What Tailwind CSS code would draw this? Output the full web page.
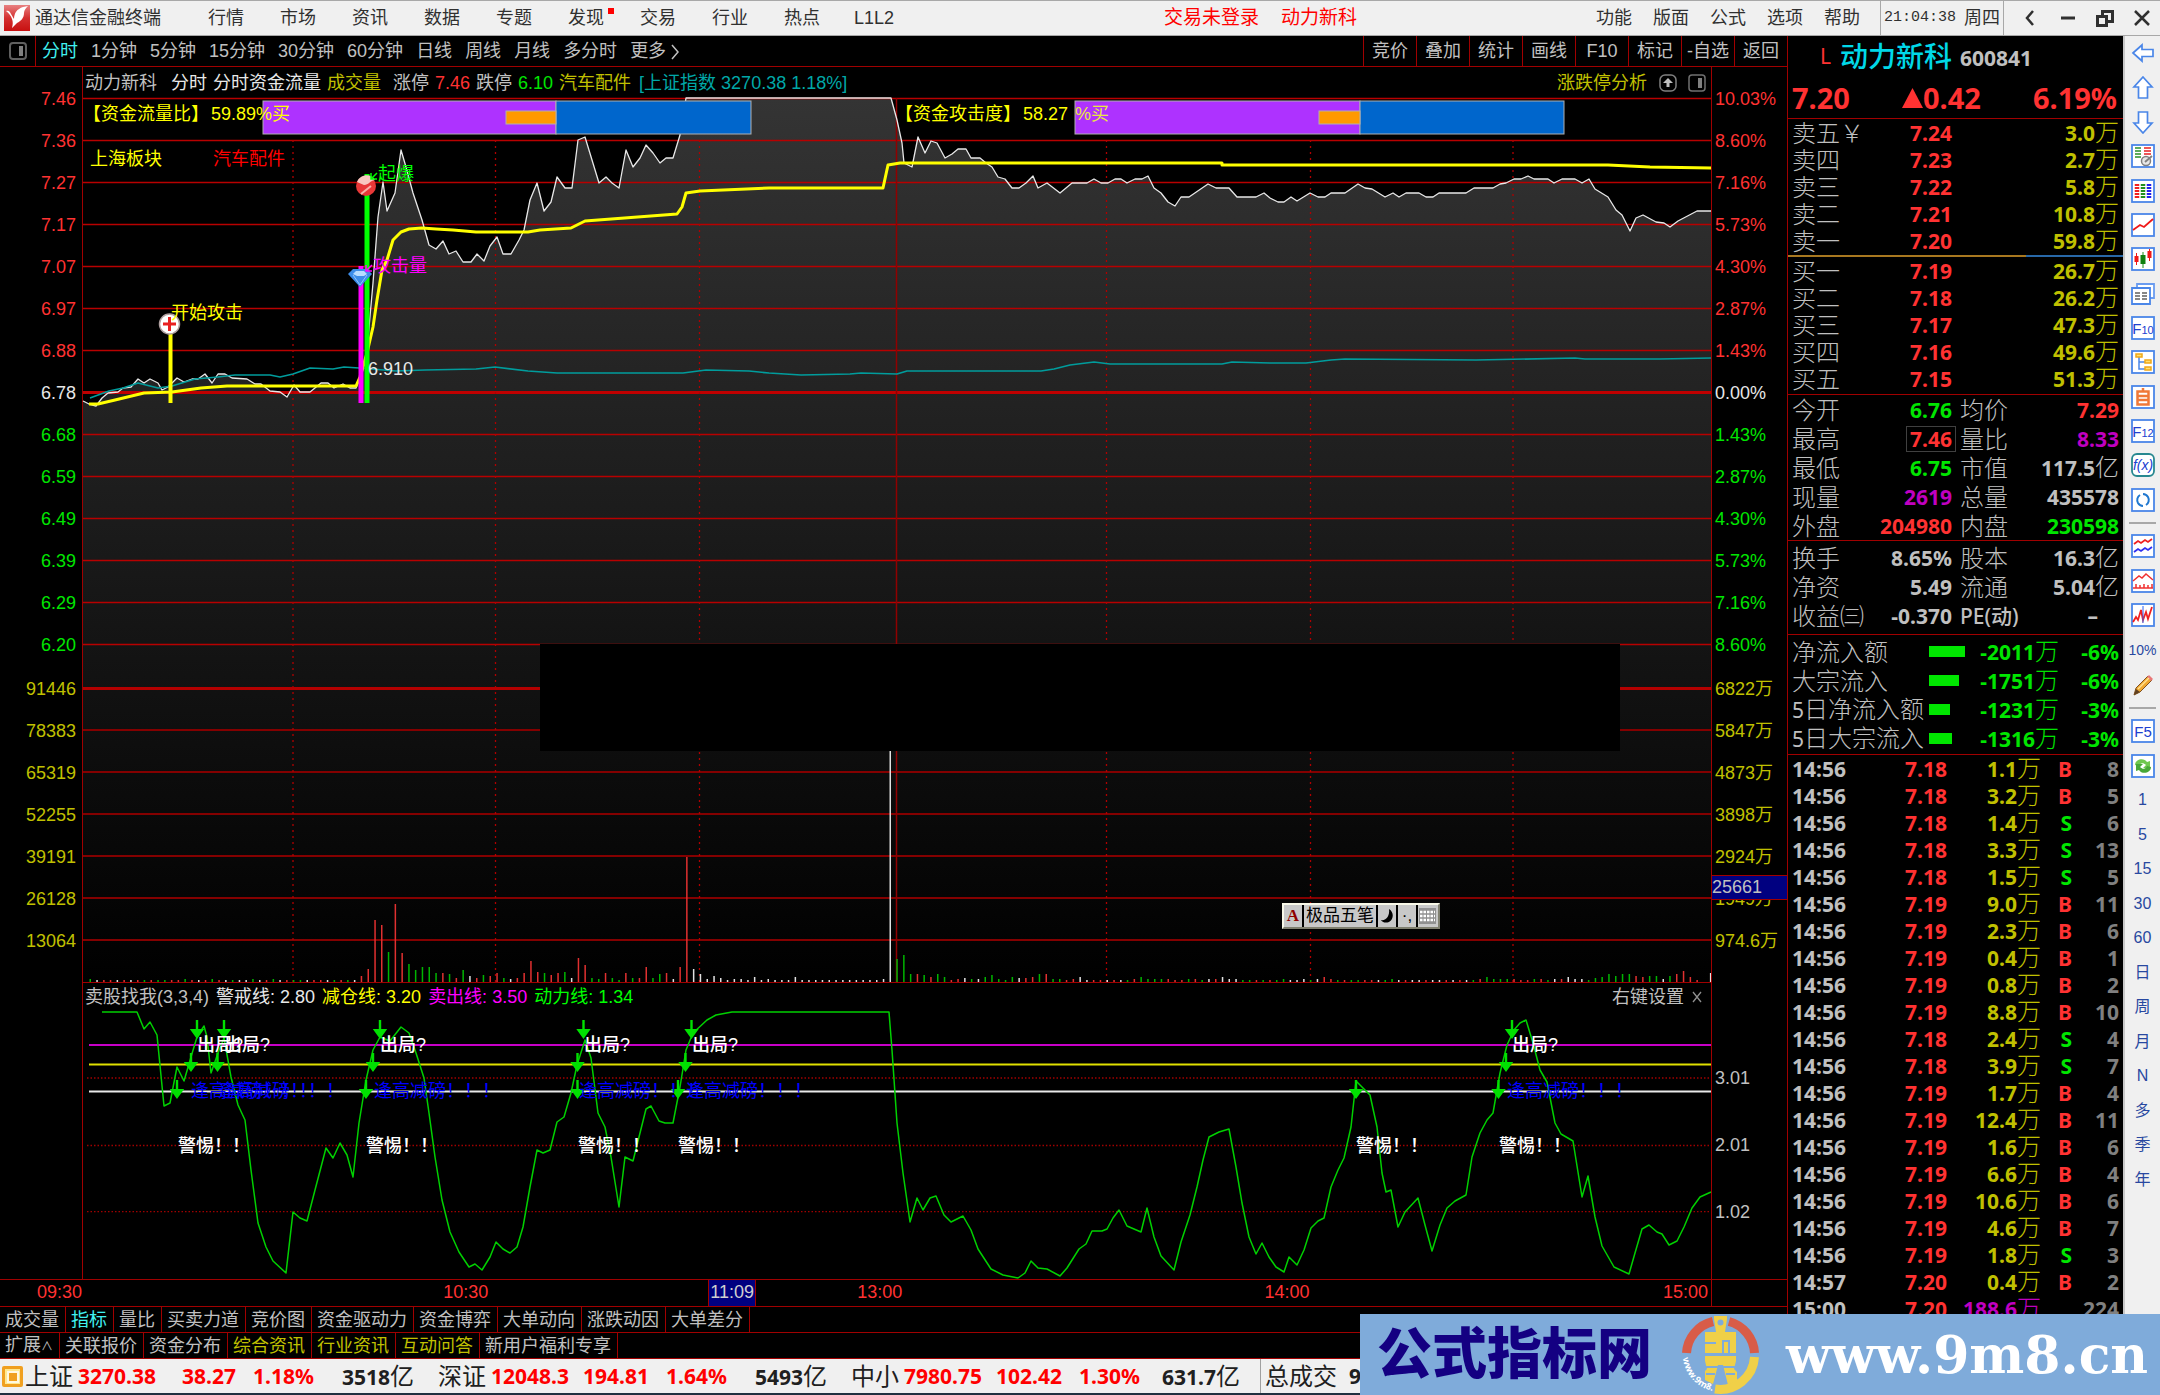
<!DOCTYPE html>
<html lang="zh-CN">
<head>
    <meta charset="UTF-8">
    <meta name="viewport" content="width=device-width, initial-scale=1.0">
    <title>通达信金融终端</title>
    <script src="https://cdn.jsdelivr.net/npm/@tailwindcss/browser@4"></script>
</head>
<body class="relative flex min-h-screen flex-col overflow-x-hidden bg-black font-['Liberation_Sans','Noto_Sans_CJK_SC',sans-serif] text-[18px] leading-6 whitespace-nowrap text-[#c0c0c0]">

    <!-- Menu bar -->
    <header class="flex h-9 items-center border-y border-[#a8a8a8] bg-[#f0f0f0] text-[#303030]">
        <svg class="ml-1 size-[26px]" viewBox="0 0 26 26">
            <defs><linearGradient id="logoRed" x1="0" y1="0" x2="0" y2="1"><stop offset="0" stop-color="#e88080"/><stop offset=".5" stop-color="#d43030"/><stop offset="1" stop-color="#c81010"/></linearGradient></defs>
            <rect width="26" height="26" fill="url(#logoRed)"/>
            <path d="M2 6c3-1 4 1 5 3l3 5c0-6 3-10 9-12l5-1c-2 2-4 4-4 7 0 5-3 8-7 10l-5 5c1-4 1-6 0-9C7 11 5 8 2 6z" fill="#fff"/>
        </svg>
        <h1 class="ml-[5px] w-[155px]">通达信金融终端</h1>
        <nav id="menuLeft" class="flex"></nav>
        <div class="ml-auto flex gap-[22px] text-[19px] text-[#ff0000]"><a href="#">交易未登录</a><a href="#">动力新科</a></div>
        <nav class="ml-[239px] flex gap-[21px]"><a href="#">功能</a><a href="#">版面</a><a href="#">公式</a><a href="#">选项</a><a href="#">帮助</a></nav>
        <div class="ml-5 flex h-full items-center gap-2 border-x border-[#a8a8a8] px-[3px]"><time class="font-['Liberation_Mono',monospace] text-[15px]">21:04:38</time><span>周四</span></div>
        <div class="ml-[17px] flex items-center gap-[17px] pr-2">
            <button aria-label="返回"><svg class="size-5" viewBox="0 0 20 20" fill="none" stroke="#303030" stroke-width="2.5"><path d="M12 3 6 10l6 7"/></svg></button>
            <button aria-label="最小化"><svg class="size-5" viewBox="0 0 20 20" stroke="#303030" stroke-width="3"><path d="M3 10h14"/></svg></button>
            <button aria-label="还原"><svg class="size-5" viewBox="0 0 20 20" fill="none" stroke="#303030" stroke-width="3"><path d="M2.500 8.500h9v9h-9z"/><path d="M7.500 8V3.500h10v10H12"/></svg></button>
            <button aria-label="关闭"><svg class="size-5" viewBox="0 0 20 20" stroke="#303030" stroke-width="2.500"><path d="m3 3 14 14M17 3 3 17"/></svg></button>
        </div>
    </header>

    <main class="flex flex-1">
        <!-- Chart side -->
        <section class="flex min-w-0 flex-1 flex-col">
            <div class="flex h-[31px] items-center border-b border-[#a00000]">
                <button aria-label="侧栏" class="flex h-full w-9 items-center justify-center border-r border-[#a00000]"><svg class="size-[18px]" viewBox="0 0 18 18" fill="none"><rect x="1" y="1" width="16" height="16" rx="3" stroke="#606060" stroke-width="2"/><path d="M12 4v10" stroke="#808080" stroke-width="4"/></svg></button>
                <nav id="periods" class="flex gap-[13px] pl-1.5"></nav>
                <div id="tools" class="ml-auto grid h-full grid-cols-8"></div>
            </div>

            <div class="grid grid-cols-[82px_1fr_76px]">
                <div id="axisLeft" class="pt-[11px] pr-1.5 text-right"></div>

                <div class="flex min-w-0 flex-col border-l border-[#a00000]">
                    <div class="flex h-[31px] items-center pl-0.5">
                        <span class="mr-3.5">动力新科</span>
                        <span class="mr-1.5 text-[#e8e8e8]">分时</span><span class="mr-1.5 text-[#e8e8e8]">分时资金流量</span>
                        <span class="mr-3 text-[#c0c000]">成交量</span>
                        <span class="mr-1.5">涨停</span><span class="mr-1.5 text-[#ff3232]">7.46</span>
                        <span class="mr-1.5">跌停</span><span class="mr-1.5 text-[#00e600]">6.10</span>
                        <span class="mr-2 text-[#c0c000]">汽车配件</span>
                        <span class="text-[#00a8a8]">[上证指数 3270.38 1.18%]</span>
                        <a href="#" class="ml-auto text-[#c0c000]">涨跌停分析</a>
                        <svg class="ml-3 size-[18px]" viewBox="0 0 18 18" fill="none"><rect x="1" y="1" width="16" height="16" rx="5" stroke="#808080" stroke-width="1.500"/><path d="M9 13V7" stroke="#c0c0c0" stroke-width="3"/><path d="m4 9 5-5 5 5z" fill="#c0c0c0"/></svg>
                        <svg class="mr-[5px] ml-[11px] size-[18px]" viewBox="0 0 18 18" fill="none"><rect x="1" y="1" width="16" height="16" rx="3" stroke="#707070" stroke-width="1.500"/><path d="M12 4v10" stroke="#808080" stroke-width="4"/></svg>
                    </div>

                    <div id="pricePane" class="relative h-[884px]">
                        <svg id="priceSvg" class="absolute inset-0 size-full overflow-visible" viewBox="83 98 1628 884" preserveAspectRatio="none"></svg>
                    </div>

                    <div class="flex h-7 items-center gap-[7px] border-t border-[#a00000] pl-0.5">
                        <span>卖股找我(3,3,4)</span>
                        <span class="text-[#e8e8e8]">警戒线: 2.80</span>
                        <span class="text-[#ffff00]">减仓线: 3.20</span>
                        <span class="text-[#ff00ff]">卖出线: 3.50</span>
                        <span class="text-[#00ff00]">动力线: 1.34</span>
                        <span class="ml-auto">右键设置</span>
                        <button aria-label="关闭指标"><svg class="mr-2 size-3" viewBox="0 0 12 12" stroke="#909090" stroke-width="1.300"><path d="m2 1 8 10M10 1 2 11"/></svg></button>
                    </div>

                    <div id="signalPane" class="relative h-[269px]">
                        <svg id="signalSvg" class="absolute inset-0 size-full overflow-visible" viewBox="83 1010 1628 269" preserveAspectRatio="none"></svg>
                    </div>
                </div>

                <div class="relative border-l border-[#a00000] pt-[11px]">
                    <div id="axisRight" class="pl-[3px]"></div>
                    <div class="mt-[83px] pl-[3px]"><div class="h-[67px] leading-[67px]">3.01</div><div class="h-[67px] leading-[67px]">2.01</div><div class="h-[67px] leading-[67px]">1.02</div></div>
                    <div class="absolute inset-x-0 top-[808px] h-[25px] border-y border-[#a00000] bg-[#000080] leading-[23px]">25661</div>
                </div>
            </div>

            <div class="flex h-[27px] border-t border-[#a00000]">
                <div class="relative flex-1 leading-6 text-[#ff3232]">
                    <span class="absolute left-[37px]">09:30</span>
                    <span class="absolute left-[25.9%]">10:30</span>
                    <span class="absolute left-[41.4%] h-full border-x border-[#a00000] bg-[#000080] px-px text-[#d0d0d0]">11:09</span>
                    <span class="absolute left-[50.1%]">13:00</span>
                    <span class="absolute left-[73.9%]">14:00</span>
                    <span class="absolute right-[3px]">15:00</span>
                </div>
                <div class="w-[76px] border-l border-[#a00000]"></div>
            </div>
            <nav id="tabsTop" class="flex h-[26px] border-t border-[#a00000]"></nav>
            <nav id="tabsBottom" class="flex h-[27px] border-y border-[#a00000]"></nav>
        </section>

        <!-- Quote panel -->
        <aside class="w-[336px] border-l border-[#a00000] font-['Noto_Sans','Noto_Sans_CJK_SC',sans-serif] text-[21px]">
            <div class="h-[83px] border-b border-[#a00000]">
                <h2 class="flex h-10 items-center pl-8">
                    <span class="w-5 text-[#ff3232]">L</span>
                    <span class="text-[28px] font-medium text-[#00d8e8]">动力新科</span>
                    <span class="ml-2 pt-1 font-bold">600841</span>
                </h2>
                <div class="flex h-11 items-center justify-between pr-1.5 pl-1 text-[29px] font-bold text-[#ff3232]"><span>7.20</span><span class="flex items-center"><svg class="h-5 w-[21px]" viewBox="0 0 21 20"><path d="M10.500 0 21 20H0z" fill="#ff3232"/></svg>0.42</span><span>6.19%</span></div>
            </div>
            <table class="w-full table-fixed"><tbody id="asks"></tbody></table>
            <div class="mt-px flex h-0.5"><div class="w-[238px] bg-[#a87820]"></div><div class="flex-1 bg-[#2868a8]"></div></div>
            <table class="w-full table-fixed"><tbody id="bids"></tbody></table>
            <div class="mt-0.5 border-t border-[#a00000]"><table class="w-full table-fixed"><tbody id="statsA"></tbody></table></div>
            <div class="border-t border-[#a00000] pt-0.5 pb-1"><table class="w-full table-fixed"><tbody id="statsB"></tbody></table></div>
            <div class="border-t border-[#a00000] pt-0.5 pb-px"><table class="w-full table-fixed"><tbody id="flows"></tbody></table></div>
            <div class="border-t border-[#a00000]"><table class="w-full table-fixed"><tbody id="ticks"></tbody></table></div>
        </aside>

        <!-- Tool strip -->
        <nav class="w-[37px] border-l-2 border-[#c8c8c8] bg-[#f0f0f0] text-[16px] text-[#2848a0]">
            <div id="strip1" class="flex h-[481px] flex-col"></div>
            <div class="flex h-3 items-center px-1"><hr class="w-full border-t-2 border-[#a8a8a8]"></div>
            <div id="strip2" class="flex h-[173px] flex-col"></div>
            <div class="flex h-3 items-center px-1"><hr class="w-full border-t-2 border-[#a8a8a8]"></div>
            <div id="strip3" class="flex h-[483px] flex-col"></div>
        </nav>
    </main>

    <!-- Index status bar -->
    <footer class="flex h-9 items-center border-b-2 border-[#203040] bg-[#f0f0f0] font-['Noto_Sans','Noto_Sans_CJK_SC',sans-serif] text-[24px] text-[#202020]">
        <svg class="mr-0.5 ml-0.5 size-[21px]" viewBox="0 0 21 21"><rect width="21" height="21" rx="2" fill="#f0a020"/><rect x="3" y="3" width="15" height="15" fill="#ffe890"/><rect x="5" y="5" width="12" height="12" fill="#fff8e0"/><rect x="7" y="7" width="8" height="8" fill="#f0a020"/></svg>
        <div id="indexes" class="flex gap-6"></div>
        <div class="ml-5 flex h-full items-center border-l border-[#a0a0a0] pl-1">总成交<b class="ml-3 text-[21px]">9011</b>亿</div>
    </footer>

    <!-- Input method bar -->
    <div class="absolute top-[903px] left-[59.35%] flex h-[26px] border-2 border-[#f8f8e8] border-r-[#808070] border-b-[#808070] bg-[#c8c8c8] text-[17px] leading-[22px] text-black">
        <button class="w-5 border-r-2 border-black font-['Liberation_Serif',serif] font-bold text-[#900000]">A</button>
        <button class="border-r-2 border-black px-0.5">极品五笔</button>
        <button aria-label="半角" class="w-5 border-r-2 border-black"><svg class="mx-auto size-4" viewBox="0 0 16 16"><path d="M10 1c5 3 5 10 0 13-3 1-6 1-8-2 5 1 9-4 8-11z"/></svg></button>
        <button class="w-5 border-r-2 border-black">·,</button>
        <button aria-label="软键盘" class="w-5"><svg class="mx-auto h-4 w-[17px]" viewBox="0 0 17 16" stroke="#fff" stroke-width="2.500"><rect width="17" height="16" fill="#909090" stroke="none"/><path stroke-dasharray="2.500 1" d="M1 4h15M1 8h15M1 12h15"/></svg></button>
    </div>

    <!-- Site banner -->
    <a href="#" class="absolute right-0 bottom-0 flex h-[81px] w-[800px] items-center bg-[#7fabda]">
        <span class="w-[320px] pl-[17px] text-[55px] leading-none font-black text-[#140082]">公式指标网</span>
        <svg class="h-[78px] w-[82px]" viewBox="0 0 82 78">
            <g fill="none" stroke-width="9">
                <path d="M6.500 37A34.500 34.500 0 0 1 33 5.500" stroke="#d85c48"/>
                <path d="M49 5.500A34.500 34.500 0 0 1 74.500 37" stroke="#d85c48"/>
                <path d="M74.500 41A34.500 34.500 0 0 1 35 73" stroke="#f0d048"/>
            </g>
            <g fill="#f0d048"><path d="M34 0h13v3l-2 13H36L34 3z"/><path d="M25 16h31v21H25z"/><path d="M25 40h31v5l-2 8 3 3v9l-9 4-5-20h-5l-5 19-8-4v-9l2-2-2-8z"/></g>
            <circle cx="40.500" cy="6.500" r="3" fill="#7fabda"/>
            <path d="M25 27h11M43 37V25h6v12M26 51h12M43 51h12M26 58h9M46 58h9" stroke="#7fabda" stroke-width="2" fill="none"/>
            <path id="ring" d="M3 42A38 38 0 0 0 33 75" fill="none"/>
            <text class="font-['Noto_Sans',sans-serif]" font-size="9" font-weight="700" fill="#fff"><textPath href="#ring">www.9m8.cn</textPath></text>
        </svg>
        <span class="pl-6 font-['DejaVu_Serif',serif] text-[52px] leading-none font-bold text-white">www.9m8.cn</span>
    </a>

    <script>
        const $ = id => document.getElementById(id);
        const fill = (id, html) => { $(id).innerHTML = html; };
        const RED = 'text-[#ff3232]', GREEN = 'text-[#00e600]', YELLOW = 'text-[#c0c000]', PURPLE = 'text-[#c000c0]', GRAY = 'text-[#c0c0c0]';

        // ---- menus and tabs ----
        fill('menuLeft', '行情 市场 资讯 数据 专题 发现 交易 行业 热点 L1L2'.split(' ').map(t =>
            `<a href="#" class="relative w-[72px] text-center">${t}${t === '发现' ? '<i class="absolute top-0.5 right-2 size-1.5 bg-[#ff0000]"></i>' : ''}</a>`).join(''));
        fill('periods', '分时 1分钟 5分钟 15分钟 30分钟 60分钟 日线 周线 月线 多分时 更多'.split(' ').map((t, i) =>
            `<button class="${i ? '' : 'text-[#40f0f0]'}">${t}${t === '更多' ? '<svg class="ml-1 inline h-4 w-2.5" viewBox="0 0 10 16" fill="none" stroke="#c0c0c0" stroke-width="1.500"><path d="m2 1 6 7-6 7"/></svg>' : ''}</button>`).join(''));
        fill('tools', '竞价 叠加 统计 画线 F10 标记 -自选 返回'.split(' ').map(t =>
            `<button class="w-[53px] border-l border-[#a00000] text-center">${t}</button>`).join(''));
        const tabs = (list, on) => list.split(' ').map(t =>
            `<button class="border-r border-[#a00000] pr-1.5 pl-[5px] leading-6 ${on[t] || ''}">${t.replace('∧', '<small class="text-[12px]">∧</small>')}</button>`).join('');
        fill('tabsTop', tabs('成交量 指标 量比 买卖力道 竞价图 资金驱动力 资金博弈 大单动向 涨跌动因 大单差分', { '指标': 'text-[#40f0f0]' }));
        fill('tabsBottom', tabs('扩展∧ 关联报价 资金分布 综合资讯 行业资讯 互动问答 新用户福利专享', { '综合资讯': YELLOW, '行业资讯': YELLOW, '互动问答': YELLOW }));

        // ---- axes ----
        const axis = (prices, volumes, mid) => prices.map((t, i) =>
            `<div class="h-[42px] leading-[42px] ${i < mid ? RED : i === mid ? 'text-[#e8e8e8]' : GREEN}">${t}</div>`).join('') +
            '<div class="h-0.5"></div>' + volumes.map(t => `<div class="h-[42px] leading-[42px] ${YELLOW}">${t}</div>`).join('');
        fill('axisLeft', axis('7.46 7.36 7.27 7.17 7.07 6.97 6.88 6.78 6.68 6.59 6.49 6.39 6.29 6.20'.split(' '),
            '91446 78383 65319 52255 39191 26128 13064'.split(' '), 7));
        fill('axisRight', axis('10.03% 8.60% 7.16% 5.73% 4.30% 2.87% 1.43% 0.00% 1.43% 2.87% 4.30% 5.73% 7.16% 8.60%'.split(' '),
            '6822万 5847万 4873万 3898万 2924万 1949万 974.6万'.split(' '), 7));

        // ---- price and volume chart ----
        const price = '83,401 89,404 96,406 102,398 108,393 118,392 123,388 131,387 138,379 144,383 150,379 158,383 162,390 168,387 177,378 184,382 192,379 198,379 205,374 212,383 218,374 225,374 232,378 247,379 255,384 261,384 270,391 280,392 287,397 294,385 300,392 310,392 321,383 328,383 334,388 343,384 350,388 356,388 362,373 367,350 373,283 378,217 383,182 387,211 395,193 401,150 406,167 413,193 422,220 429,245 436,249 443,241 449,254 456,251 463,262 471,262 477,254 484,261 490,246 497,237 503,254 511,254 519,240 524,230 530,200 537,183 544,211 551,202 557,177 565,188 572,188 578,140 585,137 592,160 599,183 606,177 612,183 619,188 626,150 633,167 640,158 646,145 653,153 660,163 666,158 673,158 680,135 686,98 891,98 897,120 902,143 904,163 912,167 918,137 925,153 931,141 937,143 945,158 952,154 958,149 966,149 971,158 980,158 986,163 992,167 998,177 1005,179 1012,188 1019,188 1026,183 1033,176 1038,188 1047,183 1060,193 1072,183 1087,183 1094,179 1101,183 1108,183 1115,179 1121,179 1127,183 1135,179 1142,179 1148,176 1154,188 1161,193 1168,202 1175,206 1181,197 1189,197 1208,184 1216,188 1229,188 1237,197 1256,197 1264,193 1270,198 1278,202 1284,202 1291,197 1297,201 1310,193 1318,197 1325,197 1331,193 1345,193 1358,184 1365,188 1372,189 1385,197 1393,193 1399,197 1406,193 1419,193 1426,197 1433,197 1439,193 1466,193 1474,188 1493,188 1500,184 1506,183 1514,179 1521,179 1528,176 1534,179 1548,179 1554,183 1562,179 1575,179 1582,183 1589,179 1595,189 1608,197 1616,210 1622,215 1630,231 1636,218 1643,215 1656,222 1664,223 1670,227 1678,221 1697,211 1711,211';
        const average = '89,404 98,404 115,400 144,393 172,392 201,388 227,386 356,386 360,377 367,353 373,327 377,300 382,270 387,260 393,240 401,232 409,229 422,228 436,229 453,230 476,232 528,232 540,230 571,228 585,221 677,214 682,207 686,193 700,191 769,188 883,188 888,165 900,163 1222,163 1222,165 1608,165 1650,167 1711,168';
        const market = '90,398 109,391 123,388 138,383 158,388 172,386 195,379 218,377 235,375 270,375 280,377 293,374 310,368 333,369 344,367 359,368 396,371 425,370 476,369 495,367 528,371 557,373 683,373 706,370 749,371 769,373 801,375 850,374 861,373 897,374 907,371 1041,371 1054,369 1070,365 1094,362 1110,364 1222,364 1232,362 1270,363 1306,363 1331,360 1345,359 1476,360 1575,358 1585,359 1660,359 1711,358';
        const INK = { r: '#e03030', g: '#00b400', w: '#e0e0e0' };

        // one entry per minute: bar height and colour
        let bars = ('3g 2w 2r 2r 2w 2r 2w 2r 2g 2r 2g 2g 2r 2r 3g 2r 2w 2r 3g 2r 2w 2g 2w 2w 3g 2w 2r 3g 2w 2r 2g 2g 2w 2r 2r 2w 2g 2r 2g 2w ' +
            '6r 13r 62r 57r 30g 78r 29r 18g 12g 15g 15g 9g 9r 8g 4r 12g 6w 4r 7g 6r 9r 4g 3w 4r 9r 21r 10r 9g 7r 9r 10g 4w 24r 17r 4g 3g 9r 4g 2g 9r 4g 4r 15r 4g 8g 9r 3w 15r 125r ' +
            '13w 8w 3w 6w 4w 2w 3w 3w 2w 5w 2w 3w 2w 2w 2w 5w 2w 2w 2w 2w 2w 2w 2w 2w 2w 2w 2w 2w 3w 300w ' +
            '23g 27g 8g 8r 7g 5r 8g 5g 2r 3r 4w 3g 3w 5g 7g 3g 2g 5g 4w 4r 5r 8g 8r 3g 3g 2r 3r 5w 2w 2r').split(' ');
        const quiet = '2r 2w 2r 2w 2g 3r 5g 3g 3g 3g 3r 2r 2r 3g 3r 2g 3w 3r 5w 3w 3w 2g 2g 2r 2g 2r 2g 3g 2w 2w 3w 2g 3w 5r 3r 2g 2r 2g 2g 2r 2r 2w 2g 3g 2w 2r 2w 2w 2r 2w 2w'.split(' ');
        for (let i = 0; bars.length < 222; i++) bars.push(quiet[i % quiet.length]);
        bars = bars.concat('4g 5g 8g 6g 8g 8g 6r 5r 6g 6g 3w 6g 8r 11r 5r 2r 0w 9w'.split(' '));

        const line = (pts, color, w) => `<polyline points="${pts}" fill="none" stroke="${color}" stroke-width="${w}" stroke-linejoin="round"/>`;
        const hline = (y, color, w, x1 = 83) => `<path d="M${x1} ${y}H1711" stroke="${color}" stroke-width="${w}"/>`;
        let svg = '<defs><linearGradient id="fade" gradientUnits="userSpaceOnUse" x1="0" y1="98" x2="0" y2="982"><stop offset="0" stop-color="#343434"/><stop offset="1" stop-color="#000"/></linearGradient></defs>';
        svg += `<polygon points="${price} 1711,982 83,982" fill="url(#fade)"/>`;
        for (let i = 0; i < 14; i++) svg += hline(98.5 + 42 * i, i === 7 ? '#c00000' : '#b80000', i === 7 ? 3 : 1.6);
        for (let i = 0; i < 7; i++) svg += hline(i ? 688 + 42 * i : 688.5, i ? '#840000' : '#b40000', i ? 2 : 3);
        [293, 495.5, 699.5, 1106.5, 1310.5, 1513].forEach(x => {
            svg += `<path d="M${x} 140V982" stroke="#b00000" stroke-width="1.300" stroke-dasharray="2 4"/>`;
        });
        svg += '<path d="M896.500 98V982" stroke="#900000" stroke-width="1.500"/>';
        bars.forEach((b, i) => {
            const h = parseInt(b);
            svg += `<rect x="${(89.5 + i * 6.78).toFixed(1)}" y="${982 - h}" width="1.500" height="${h}" fill="${INK[b.slice(-1)]}"/>`;
        });
        svg += line(price, '#e8e8e8', 1.3) + line(market, '#009c9c', 1.7) + line(average, '#ffff00', 3);
        svg += '<g stroke="#b0b0b0"><rect x="263" y="101" width="293" height="33" fill="#ae32ff"/><rect x="556" y="101" width="195" height="33" fill="#0066cc"/><rect x="506" y="111" width="50" height="13" fill="#ff9900"/><rect x="1075" y="101" width="285" height="33" fill="#ae32ff"/><rect x="1360" y="101" width="204" height="33" fill="#0066cc"/><rect x="1319" y="111" width="41" height="13" fill="#ff9900"/></g>';
        svg += '<rect x="540" y="644" width="1080" height="107" fill="#000"/>';
        svg += '<path d="M170.500 333V403" stroke="#ff0" stroke-width="4"/><path d="M361 266V403" stroke="#f0f" stroke-width="5"/><path d="M367 174V403" stroke="#0f0" stroke-width="5"/>';
        svg += '<circle cx="169.500" cy="324" r="10" fill="#fff" stroke="#b0a0a0" stroke-width="1.500"/><path d="M163 324h13M169.500 317v14" stroke="#e82020" stroke-width="3"/>';
        svg += '<circle cx="366" cy="186" r="10" fill="#e83838"/><path d="M357 182c3-8 14-9 18-2-6 1-6 5-11 5z" fill="#f8c8c0"/><path d="m361 194 10-8" stroke="#f8b0a8" stroke-width="2"/>';
        svg += '<path d="m348 274 5-5h14l5 5-12 13z" fill="#3c8ce8"/><path d="m353 274 3-3h8l3 3-3 2h-7z" fill="#b8dcff"/><path d="m360 285-7-10M360 285l7-10" stroke="#90c4ff"/>';
        svg += '<path d="m371 179 6-6M371 173v6h6" stroke="#0f0" fill="none" stroke-width="1.500"/><path d="m366 271 6-6M366 265v6h6" stroke="#f0f" fill="none" stroke-width="1.500"/>';
        fill('priceSvg', svg);

        // labels sit on the plot by data coordinates
        function label(pane, top, height, x, y, text, cls) {
            $(pane).insertAdjacentHTML('beforeend', `<span class="absolute -translate-y-1/2 leading-none ${cls}" style="left:${((x - 83) / 16.28).toFixed(2)}%;top:${((y - top) / height * 100).toFixed(2)}%">${text}</span>`);
        }
        const onPrice = (x, y, text, cls) => label('pricePane', 98, 884, x, y, text, cls);
        onPrice(83, 114, '【资金流量比】', 'text-[#ffff00]');
        onPrice(211, 114, '59.89%买', 'text-[#ffff00]');
        onPrice(895, 114, '【资金攻击度】', 'text-[#ffff00]');
        onPrice(1023, 114, '58.27', 'text-[#ffff00]');
        onPrice(1075, 114, '%买', 'text-[#e8e840]');
        onPrice(90, 159, '上海板块', 'text-[#ffff00]');
        onPrice(213, 159, '汽车配件', 'text-[#ff0000]');
        onPrice(378, 174, '起爆', 'text-[#00ff00]');
        onPrice(373, 266, '攻击量', 'text-[#ff00ff]');
        onPrice(171, 313, '开始攻击', 'text-[#ffff00]');
        onPrice(368, 369, '6.910', 'text-[#e8e8e8]');

        // ---- indicator chart ----
        const power = '102,1012 137,1012 144,1029 150,1022 157,1035 164,1106 170,1103 177,1067 184,1081 191,1057 197,1037 204,1026 207,1037 211,1073 218,1053 224,1038 231,1077 238,1105 245,1120 251,1170 258,1223 266,1247 273,1261 286,1273 293,1212 300,1218 307,1221 315,1190 326,1148 333,1158 340,1143 347,1155 353,1177 359,1123 366,1080 373,1050 380,1037 390,1041 401,1027 409,1033 416,1053 424,1078 429,1113 435,1157 442,1200 450,1232 459,1252 469,1267 475,1264 482,1270 490,1257 496,1242 503,1249 510,1253 517,1247 523,1227 530,1187 537,1150 543,1153 550,1150 557,1122 564,1117 571,1093 577,1065 585,1040 591,1058 598,1113 605,1127 611,1157 619,1207 625,1157 633,1161 639,1137 646,1109 651,1106 659,1121 665,1123 673,1123 680,1087 686,1050 693,1033 707,1020 716,1015 732,1012 889,1012 892,1050 897,1123 903,1173 910,1222 917,1198 923,1210 930,1198 936,1196 944,1215 951,1222 963,1216 971,1230 978,1249 991,1269 1003,1275 1018,1278 1025,1273 1031,1261 1038,1268 1047,1269 1060,1276 1067,1268 1079,1249 1086,1244 1092,1231 1102,1231 1107,1229 1113,1218 1119,1210 1127,1226 1141,1232 1147,1208 1154,1237 1161,1256 1174,1270 1181,1242 1190,1215 1197,1187 1203,1160 1209,1137 1219,1132 1229,1129 1236,1167 1242,1203 1249,1237 1256,1254 1262,1243 1269,1257 1276,1267 1284,1272 1289,1257 1297,1265 1304,1250 1311,1228 1318,1221 1324,1218 1331,1187 1338,1170 1344,1158 1351,1127 1356,1081 1370,1095 1377,1127 1382,1173 1386,1192 1391,1190 1398,1227 1405,1212 1418,1198 1425,1225 1432,1251 1440,1225 1447,1208 1455,1201 1466,1195 1472,1157 1480,1133 1487,1120 1493,1113 1500,1073 1507,1045 1514,1030 1520,1023 1526,1020 1533,1043 1540,1070 1547,1082 1555,1123 1561,1134 1573,1141 1582,1197 1588,1176 1595,1217 1602,1246 1614,1267 1629,1274 1635,1253 1642,1229 1649,1225 1657,1232 1662,1234 1669,1245 1677,1241 1684,1227 1692,1208 1700,1197 1711,1192';
        let sig = hline(1045, '#c800c8', 2, 89) + hline(1064.5, '#e0e000', 2, 89) + hline(1091.5, '#e8e8e8', 2, 89);
        [1078, 1145.5, 1211.7].forEach(y => {
            sig += `<path d="M87 ${y}H1711" stroke="#a00000" stroke-width="1.300" stroke-dasharray="1.500 2"/>`;
        });
        sig += line(power, '#00d000', 1.5);
        const arrows = { 1020: [197, 224, 380, 583.5, 691.5, 1512], 1053: [191, 217.5, 373, 577.5, 685.5, 1506], 1080: [177, 366, 577.5, 678, 1356, 1498.5] };
        for (const y in arrows) arrows[y].forEach(x => {
            sig += `<path d="M${x - 1.2} ${y}h2.400v9h6l-7.200 10-7.200-10h6z" fill="#00e000"/>`;
        });
        fill('signalSvg', sig);
        const onSignal = (x, y, text, cls) => label('signalPane', 1010, 269, x, y, text, cls);
        [191, 218, 374, 579, 686, 1507].forEach(x => onSignal(x, 1091, '逢高减磅！！！', 'text-[#0000ff]'));
        [197, 224, 380, 584, 692, 1512].forEach(x => onSignal(x, 1045, '出局?', 'font-medium text-white'));
        [178, 366, 578, 678, 1356, 1499].forEach(x => onSignal(x, 1146, '警惕！！', 'font-medium text-white'));

        // ---- quote tables ----
        // trailing unit characters are drawn larger and lighter than the digits
        const num = t => t.replace(/[万亿]$/, '<span class="text-[24px] leading-none font-light">$&</span>');
        const book = (names, prices, amounts) => names.map((n, i) =>
            `<tr class="h-[27px] leading-6"><th class="w-[100px] pl-1 text-left text-[24px] font-light">${n}</th><td class="w-16 text-right font-bold ${RED}">${prices[i]}</td><td class="pr-1 text-right font-bold ${YELLOW}">${num(amounts[i])}</td></tr>`).join('');
        fill('asks', book(['卖五￥', '卖四', '卖三', '卖二', '卖一'], ['7.24', '7.23', '7.22', '7.21', '7.20'], ['3.0万', '2.7万', '5.8万', '10.8万', '59.8万']));
        fill('bids', book(['买一', '买二', '买三', '买四', '买五'], ['7.19', '7.18', '7.17', '7.16', '7.15'], ['26.7万', '26.2万', '47.3万', '49.6万', '51.3万']));
        const stats = rows => rows.map(([a, av, ac, b, bv, bc]) =>
            `<tr class="h-[29px] leading-6"><th class="w-[84px] pl-1 text-left text-[24px] font-light">${a}</th><td class="w-20 text-right font-bold ${ac}">${av}</td><th class="w-[60px] pl-2 text-left text-[24px] font-light">${b}</th><td class="pr-1 text-right font-bold ${bc}">${num(bv)}</td></tr>`).join('');
        fill('statsA', stats([
            ['今开', '6.76', GREEN, '均价', '7.29', RED],
            ['最高', '<span class="-mr-1 inline-block border border-[#404040] px-[3px]">7.46</span>', RED, '量比', '8.33', PURPLE],
            ['最低', '6.75', GREEN, '市值', '117.5亿', GRAY],
            ['现量', '2619', PURPLE, '总量', '435578', GRAY],
            ['外盘', '204980', RED, '内盘', '230598', GREEN]]));
        fill('statsB', stats([
            ['换手', '8.65%', GRAY, '股本', '16.3亿', GRAY],
            ['净资', '5.49', GRAY, '流通', '5.04亿', GRAY],
            ['收益㈢', '-0.370', GRAY, '<span class="block text-[21px] font-medium">PE(动)</span>', '–&emsp;', GRAY]]));
        fill('flows', [['净流入额', 36, '-2011万', '-6%'], ['大宗流入', 30, '-1751万', '-6%'], ['<b class="text-[21px]">5</b>日净流入额', 21, '-1231万', '-3%'], ['<b class="text-[21px]">5</b>日大宗流入', 23, '-1316万', '-3%']].map(([n, w, v, p]) =>
            `<tr class="h-[29px] leading-6"><th class="w-[141px] pl-1 text-left text-[24px] font-light">${n}</th><td class="w-10"><div class="h-[11px] bg-[#00e600]" style="width:${w}px"></div></td><td class="w-[90px] text-right font-bold ${GREEN}">${num(v)}</td><td class="pr-1 text-right font-bold ${GREEN}">${p}</td></tr>`).join(''));
        fill('ticks', `14:56 7.18 1.1万 B 8|14:56 7.18 3.2万 B 5|14:56 7.18 1.4万 S 6|14:56 7.18 3.3万 S 13|14:56 7.18 1.5万 S 5|14:56 7.19 9.0万 B 11|14:56 7.19 2.3万 B 6|14:56 7.19 0.4万 B 1|14:56 7.19 0.8万 B 2|14:56 7.19 8.8万 B 10|14:56 7.18 2.4万 S 4|14:56 7.18 3.9万 S 7|14:56 7.19 1.7万 B 4|14:56 7.19 12.4万 B 11|14:56 7.19 1.6万 B 6|14:56 7.19 6.6万 B 4|14:56 7.19 10.6万 B 6|14:56 7.19 4.6万 B 7|14:56 7.19 1.8万 S 3|14:57 7.20 0.4万 B 2|15:00 7.20 188.6万 - 224`.split('|').map(r => {
            const [t, p, a, side, n] = r.split(' ');
            return `<tr class="h-[27px] leading-6 font-bold"><td class="w-[84px] pl-1">${t}</td><td class="w-[75px] text-right ${RED}">${p}</td><td class="w-[94px] text-right ${side === '-' ? PURPLE : YELLOW}">${num(a)}</td><td class="w-[31px] text-right ${side === 'S' ? GREEN : RED}">${side === '-' ? '' : side}</td><td class="pr-1 text-right text-[#808080]">${n}</td></tr>`;
        }).join(''));

        // ---- index bar ----
        fill('indexes', [['上证', '3270.38', '38.27', '1.18%', '3518亿'], ['深证', '12048.3', '194.81', '1.64%', '5493亿'], ['中小', '7980.75', '102.42', '1.30%', '631.7亿']].map(([n, v, d, p, a]) =>
            `<div class="flex items-center"><a href="#" class="w-[52px]">${n}</a><b class="w-[79px] text-right text-[21px] text-[#ff0000]">${v}</b><b class="w-20 text-right text-[21px] text-[#ff0000]">${d}</b><b class="w-[78px] text-right text-[21px] text-[#ff0000]">${p}</b><span class="w-[100px] text-right"><b class="text-[21px]">${a.slice(0, -1)}</b>亿</span></div>`).join(''));

        // ---- tool strip ----
        const icon = body => `<svg class="size-6" viewBox="0 0 24 24" fill="none">${body}</svg>`;
        const boxed = body => icon(`<rect x="1" y="1" width="22" height="22" fill="#fff" stroke="#4a86e8" stroke-width="1.800"/>${body}`);
        const wordBox = t => boxed(`<text x="12" y="17.500" text-anchor="middle" font-size="15" fill="#2040d0">${t}</text>`);
        const strip = (id, items) => fill(id, items.map(([name, body]) =>
            `<button aria-label="${name}" class="flex flex-1 items-center justify-center">${body || name}</button>`).join(''));
        strip('strip1', [
            ['后退', icon('<path d="M2 12 11 4v4.500h11v7H11V20z" fill="#fff" stroke="#4a86e8" stroke-width="1.700"/>')],
            ['上移', icon('<path d="m12 1 9 10h-4.500v11h-9V11H3z" fill="#fff" stroke="#4a86e8" stroke-width="1.700"/>')],
            ['下移', icon('<path d="m12 23 9-10h-4.500V2h-9v11H3z" fill="#fff" stroke="#4a86e8" stroke-width="1.700"/>')],
            ['委托', boxed('<path d="M4 4h6M4 7h6M4 10h6M4 13h6" stroke="#289028" stroke-width="1.600"/><path d="M13 4h7M13 7h7M13 10h7" stroke="#e82020" stroke-width="1.600"/><circle cx="15" cy="17" r="4.500" fill="#e8e8e8" stroke="#808080" stroke-width="1.500"/><path d="m14 18 7-6" stroke="#808080" stroke-width="2"/>')],
            ['报价', boxed('<g stroke-width="4.500" stroke-dasharray="2 1"><path d="M6 5v15" stroke="#f02020"/><path d="M12 5v15" stroke="#209020"/><path d="M18 5v15" stroke="#2020f0"/></g>')],
            ['走势', boxed('<path d="m2 17 7-5 4 2 9-8" stroke="#f01818" stroke-width="1.800"/>')],
            ['K线', boxed('<path d="M5.500 6v12M18.500 2v12" stroke="#f01818"/><path d="M12 5v16" stroke="#209020"/><path d="M3.500 9h4v6h-4zM16.500 4h4v7h-4z" fill="#f01818"/><path d="M9.500 8h5v9h-5z" fill="#108010"/>')],
            ['资讯', icon('<path d="M6 2h17v14H6z" fill="#fff" stroke="#6a9cf0" stroke-width="1.800"/><path d="M1 6h18v16H1z" fill="#fff" stroke="#4a86e8" stroke-width="1.800"/><path d="M4 11h5M4 14h5M4 17h5M11 11h5M11 14h5M11 17h5" stroke="#606060" stroke-width="1.500"/>')],
            ['F10', wordBox('F<tspan font-size="11">10</tspan>')],
            ['板块', boxed('<path d="M8 7v12h6M8 12h6" stroke="#4a86e8" stroke-width="1.500"/><path d="M5 4h6v3H5zM14 10h6v3h-6zM14 17h6v3h-6z" fill="#ffe070" stroke="#f0a818" stroke-width="1.500"/>')],
            ['自选', boxed('<path d="M6.500 6.500h11v13h-11zM7 11h10M7 15h10M12 3v3" stroke="#f07838" stroke-width="2.500"/>')],
            ['F12', wordBox('F<tspan font-size="11">12</tspan>')],
            ['公式', icon('<rect x="1" y="1" width="22" height="22" rx="5" fill="#fff" stroke="#288890" stroke-width="1.800"/><text x="12" y="17" text-anchor="middle" font-size="14" font-style="italic" fill="#2040d0">f(x)</text>')],
            ['刷新', boxed('<path d="M7 15a6 6 0 0 1 2-8M17 9a6 6 0 0 1-2 8M12 6a6 6 0 0 1 5 3M12 18a6 6 0 0 1-5-3" stroke="#2078d0" stroke-width="2"/>')]
        ]);
        strip('strip2', [
            ['多股', boxed('<path d="m3 10 4-3 3 2 4-3 3 2 4-3" stroke="#f02020" stroke-width="1.800"/><path d="m3 18 4-3 3 2 4-3 3 2 4-3" stroke="#3030f0" stroke-width="1.800"/>')],
            ['区间', boxed('<path d="m2 12 6-5 3 2 4-4 7 6M2 19h20M5 19v-4M9 19v-3M13 19v-4M17 19v-3M21 19v-4" stroke="#f03030" stroke-width="1.500"/>')],
            ['叠加', boxed('<path d="m2 19 3-5 2 3 3-10 2 10 3-8 2 7 4-12" stroke="#f02020" stroke-width="1.800"/><path d="M12 3v17" stroke="#3060f0"/>')],
            ['10%', '<span class="text-[14px]">10%</span>'],
            ['画线', icon('<path d="m3 22 2-7L17 3l4 4L9 19z" fill="#f0a830" stroke="#805020"/><path d="m16 4 2-2 4 4-2 2z" fill="#e87878"/><path d="m3 22 2-6 4 3z" fill="#604020"/><path d="m7 16 11-11" stroke="#ffe090" stroke-width="1.500"/>')]
        ]);
        strip('strip3', [['F5', wordBox('F5')], ['同步', boxed('<path d="M4 11c0-6 9-8 12-3l3-1v7h-7l3-3c-3-3-6-2-7 1z" fill="#70c850"/><path d="M20 13c0 6-9 8-12 3l-3 1v-7h7l-3 3c3 3 6 2 7-1z" fill="#48a838"/>')]]
            .concat('1 5 15 30 60 日 周 月 N 多 季 年'.split(' ').map(t => [t, ''])));
    </script>
</body>
</html>
